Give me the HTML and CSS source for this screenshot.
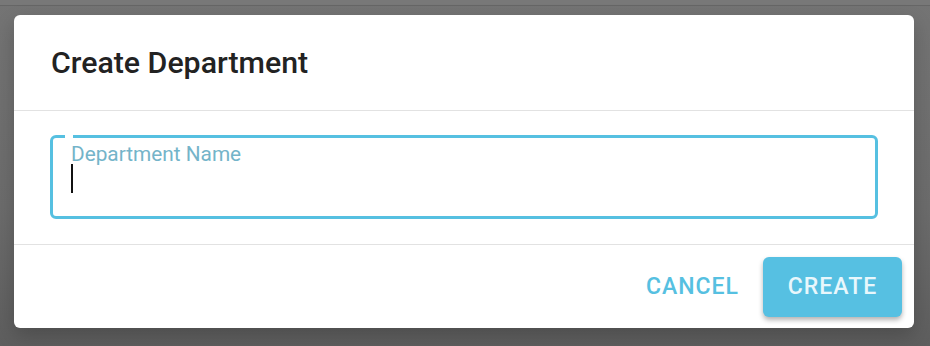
FILE: index.html
```html
<!DOCTYPE html>
<html lang="en">
<head>
    <meta charset="UTF-8">
    <title>Create Department</title>
    <link rel="stylesheet" href="styles.css">
</head>
<body>
    <div class="top-bar"></div>

    <!-- Dialog -->
    <div class="dialog">
        <div class="dialog-header">
            <h2>Create Department</h2>
        </div>
        <div class="dialog-body">
            <div class="field">
                <span class="notch"></span>
                <label>Department Name</label>
                <div class="input-line"><span class="caret"></span></div>
            </div>
        </div>
        <div class="dialog-footer">
            <button class="btn btn-text">CANCEL</button>
            <button class="btn btn-primary">CREATE</button>
        </div>
    </div>
</body>
</html>
```

FILE: styles.css
```css
/* General Styles */
body {
    margin: 0;
    padding: 0;
    height: 346px;
    overflow: hidden;
    font-family: Roboto, "Noto Sans", Arial, sans-serif;
    background: linear-gradient(#747474, #6c6c6c 60%, #5e5e5e);
}
.top-bar {
    height: 5px;
    background-color: #787878;
    border-bottom: 1px solid #666;
}
.dialog {
    margin: 9px 0 0 14px;
    width: 900px;
    height: 313px;
    background-color: #fff;
    border-radius: 6px;
    box-shadow: 0 8px 20px rgba(0, 0, 0, 0.2);
    display: flex;
    flex-direction: column;
}
.dialog-header {
    height: 95px;
    padding-left: 37px;
    display: flex;
    align-items: center;
    border-bottom: 1px solid #e2e2e2;
}
.dialog-header h2 {
    margin: 0;
    font-size: 30.3px;
    font-weight: 500;
    color: #222;
}
.dialog-body {
    padding: 24px 36px 25px;
    border-bottom: 1px solid #e2e2e2;
}
.field {
    position: relative;
    height: 78px;
    border: 3px solid #56c0e1;
    border-radius: 6px;
    padding: 0 0 0 18px;
}
.notch {
    position: absolute;
    top: -3px;
    left: 12px;
    width: 8px;
    height: 3px;
    background-color: #fff;
}
.field label {
    display: block;
    margin-top: 6px;
    font-size: 20.8px;
    color: #74b4c9;
    line-height: 20px;
}
.input-line {
    height: 30px;
}
.caret {
    display: inline-block;
    width: 2px;
    height: 29px;
    background-color: #111;
}
.dialog-footer {
    flex: 1;
    display: flex;
    justify-content: flex-end;
    align-items: center;
    gap: 10px;
    padding-right: 12px;
}
.btn {
    font-family: Roboto, "Noto Sans", Arial, sans-serif;
    font-size: 23px;
    font-weight: 500;
    letter-spacing: 1px;
    border: none;
    border-radius: 6px;
    height: 60px;
    padding: 0 14px;
    cursor: pointer;
}
.btn-text {
    background: none;
    color: #56c0e1;
}
.btn-primary {
    width: 139px;
    background-color: #56c0e2;
    color: #e8f7fc;
    box-shadow: 0 3px 5px rgba(0, 0, 0, 0.3);
}
```
